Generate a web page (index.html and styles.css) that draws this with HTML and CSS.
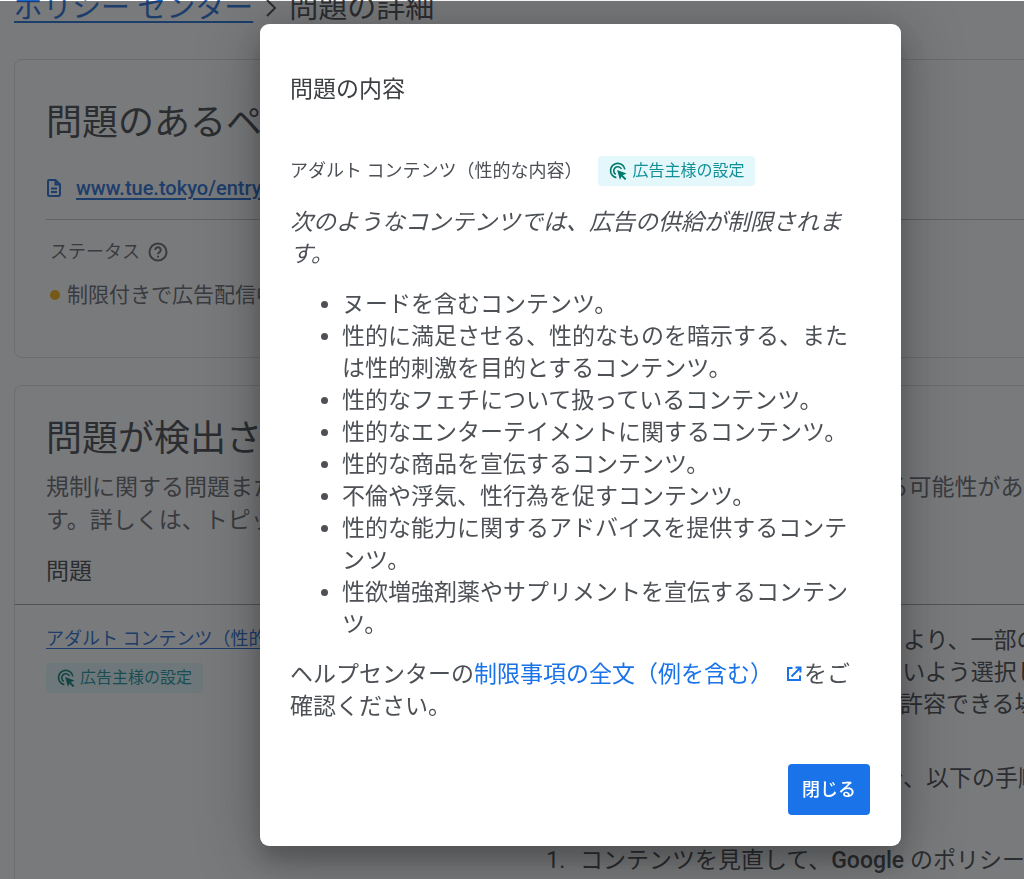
FILE: index.html
```html
<!DOCTYPE html>
<html lang="ja">
<head>
	<meta charset="utf-8">
	<meta name="viewport" content="width=device-width, initial-scale=1">
	<title>問題の詳細</title>
	<link rel="stylesheet" href="styles.css">
</head>

<body>

	<svg class="sprite" aria-hidden="true">
		<symbol id="icon-click" viewBox="0 0 20 20">
			<path d="M8.2 17.4A8 8 0 1 1 17.6 8.200" fill="none" stroke="currentColor" stroke-width="1.800"/>
			<path d="M7.600 13.700A4.500 4.500 0 1 1 13.800 7.800" fill="none" stroke="currentColor" stroke-width="1.800"/>
			<path d="M9 9l10.500 3.700-4.200 1.900 4 4-1.500 1.500-4-4-1.600 3.900z" fill="currentColor"/>
		</symbol>
	</svg>

	<main class="page">
		<nav class="breadcrumb">
			<a href="#">ポリシー センター</a>
			<svg class="chevron" viewBox="0 0 12 20" aria-hidden="true"><path d="M2 2l8 8-8 8"/></svg>
			<span>問題の詳細</span>
		</nav>

		<section class="card">
			<h1>問題のあるページ</h1>
			<div class="url">
				<svg class="doc" viewBox="0 0 16 20" aria-hidden="true">
					<path d="M3 2h6.500L14 6.500V16.500a1.500 1.500 0 0 1-1.500 1.500H3.500A1.500 1.500 0 0 1 2 16.500V3a1 1 0 0 1 1-1zM9.500 2v4.500H14M5 10.500h6M5 14h6"/>
				</svg>
				<a href="#">www.tue.tokyo/entry</a>
			</div>
			<div class="status">
				<div class="status-label">
					ステータス
					<svg class="help" viewBox="0 0 20 20" aria-hidden="true">
						<circle cx="10" cy="10" r="8.500"/>
						<path d="M7.300 8a2.700 2.700 0 1 1 4.300 2.100c-1 .7-1.600 1.100-1.600 2.200M10 13.800v1.700"/>
					</svg>
				</div>
				<div class="status-value">制限付きで広告配信中</div>
			</div>
		</section>

		<section class="card issues">
			<h1>問題が検出されました</h1>
			<p class="lead">規制に関する問題または その他の問題が検出されたため、 広告の配信が制限される可能性がありま<br>す。詳しくは、トピックをご覧ください。</p>
			<table>
				<colgroup>
					<col class="col-issue">
					<col>
				</colgroup>
				<thead>
					<tr><th colspan="2">問題</th></tr>
				</thead>
				<tbody>
					<tr>
						<td class="issue">
							<a href="#">アダルト コンテンツ（性的な内容）</a>
							<span class="badge"><svg aria-hidden="true"><use href="#icon-click"/></svg>広告主様の設定</span>
						</td>
						<td class="detail">
							<p>広告主様の希望や配信の設定内容により、一部の<br>広告はページに表示されることのないよう選択し<br>されています。そのため広告主様が許容できる場合</p>
							<p>この問題を解決する必要がある場合、以下の手順</p>
							<ol>
								<li>コンテンツを見直して、<b>Google</b> のポリシーに</li>
							</ol>
						</td>
					</tr>
				</tbody>
			</table>
		</section>
	</main>

	<div class="overlay">
		<div class="dialog" role="dialog" aria-modal="true" aria-labelledby="dialog-title">
			<h2 id="dialog-title">問題の内容</h2>
			<div class="topic">
				<span>アダルト コンテンツ（性的な内容）</span>
				<span class="badge"><svg aria-hidden="true"><use href="#icon-click"/></svg>広告主様の設定</span>
			</div>
			<p class="summary"><em>次のようなコンテンツでは、広告の供給が制限されます。</em></p>
			<ul>
				<li>ヌードを含むコンテンツ。</li>
				<li>性的に満足させる、性的なものを暗示する、または性的刺激を目的とするコンテンツ。</li>
				<li>性的なフェチについて扱っているコンテンツ。</li>
				<li>性的なエンターテイメントに関するコンテンツ。</li>
				<li>性的な商品を宣伝するコンテンツ。</li>
				<li>不倫や浮気、性行為を促すコンテンツ。</li>
				<li>性的な能力に関するアドバイスを提供するコンテンツ。</li>
				<li>性欲増強剤薬やサプリメントを宣伝するコンテンツ。</li>
			</ul>
			<p>ヘルプセンターの<a href="#">制限事項の全文（例を含む）<svg class="external" viewBox="0 0 16 16" aria-hidden="true"><path d="M6.500 2H2v12h12V9.500M9.500 1.500h5v5M14 2L5.500 10.500"/></svg></a>をご確認ください。</p>
			<div class="actions">
				<button type="button">閉じる</button>
			</div>
		</div>
	</div>

</body>

</html>
```
FILE: styles.css
```css
* {
	box-sizing: border-box;
}

body {
	margin: 0;
	height: 100vh;
	overflow: hidden;
	font-family: Roboto, "Noto Sans CJK JP", sans-serif;
	font-size: 23px;
	line-height: 32px;
	color: #3c4043;
	background: #fff;
}

h1, h2, p, ul, ol {
	margin: 0;
	padding: 0;
	font-weight: 400;
}

a {
	color: #1967d2;
}

.sprite {
	display: none;
}

/* Page behind the dialog */

.page {
	height: 100vh;
	padding-left: 14px;
	overflow: hidden;
	white-space: nowrap;
}

.breadcrumb {
	display: flex;
	align-items: center;
	gap: 12px;
	margin-top: -11px;
	font-size: 29px;
	line-height: 38px;
	color: #3c4043;
}

.breadcrumb a {
	text-underline-offset: 3px;
}

.chevron {
	width: 12px;
	height: 20px;
	fill: none;
	stroke: #3c4043;
	stroke-width: 2;
}

.card {
	margin: 32px -16px 0 0;
	padding: 40px 0 46px 31px;
	border: 1px solid #dadce0;
	border-radius: 8px;
}

.card h1 {
	font-size: 36px;
	line-height: 46px;
	color: #3c4043;
}

.url {
	display: flex;
	align-items: center;
	gap: 14px;
	margin-top: 26px;
	padding-bottom: 15px;
	border-bottom: 1px solid #bdc1c6;
	font-size: 20px;
	font-weight: 500;
}

.url a {
	text-underline-offset: 3px;
}

.doc {
	width: 16px;
	height: 20px;
	fill: none;
	stroke: #1967d2;
	stroke-width: 2;
}

.status {
	padding: 16px 0 0 4px;
	color: #5f6368;
}

.status-label {
	display: flex;
	align-items: center;
	gap: 8px;
	font-size: 18px;
}

.help {
	width: 20px;
	height: 20px;
	fill: none;
	stroke: #5f6368;
	stroke-width: 2;
}

.status-value {
	display: flex;
	align-items: center;
	gap: 7px;
	margin-top: 11px;
	font-size: 21px;
}

.status-value:before {
	content: "";
	width: 10px;
	height: 10px;
	border-radius: 50%;
	background: #f9ab00;
}

.issues {
	margin-top: 27px;
	padding: 30px 0;
}

.issues h1, .lead {
	padding-left: 31px;
}

.lead {
	margin-top: 9px;
	line-height: 33px;
	color: #5f6368;
}

table {
	width: 100%;
	margin-top: 19px;
	border-collapse: collapse;
	table-layout: fixed;
}

th {
	padding: 0 31px 16px;
	border-bottom: 1px solid #9aa0a6;
	text-align: left;
	font-weight: 400;
}

td {
	padding: 0;
	vertical-align: top;
}

.col-issue {
	width: 520px;
}

.issue {
	padding: 18px 0 0 31px;
	font-size: 18px;
}

.issue a {
	display: block;
	text-underline-offset: 3px;
}

.issue .badge {
	margin-top: 8px;
}

.detail {
	padding-top: 20px;
}

.detail p {
	margin-bottom: 42px;
}

.detail ol {
	padding-top: 8px;
	padding-left: 36px;
}

.detail li {
	padding-left: 9px;
}

.detail b {
	font-weight: 500;
}

.badge {
	display: inline-flex;
	align-items: center;
	gap: 5px;
	height: 30px;
	padding: 0 11px;
	border-radius: 4px;
	font-size: 16px;
	color: #129098;
	background: #e4f7fb;
}

.badge svg {
	width: 18px;
	height: 18px;
	color: #00796b;
}

/* Dialog */

.overlay {
	position: fixed;
	inset: 1px 0 0;
	display: flex;
	align-items: flex-start;
	padding: 23px 123px 32px 260px;
	background: rgba(32, 33, 36, 0.6);
}

.dialog {
	flex: 1;
	padding: 50px 31px 31px 30px;
	border-radius: 9px;
	background: #fff;
	box-shadow: 0 14px 22px rgba(0, 0, 0, 0.2), 0 8px 60px 8px rgba(0, 0, 0, 0.22);
	color: #4d5156;
}

.dialog h2 {
	font-size: 23px;
	color: #3c4043;
}

.topic {
	display: flex;
	align-items: center;
	gap: 16px;
	margin-top: 50px;
	font-size: 18px;
	line-height: 30px;
}

.summary {
	margin-top: 21px;
}

.dialog ul {
	margin: 18px 0;
	padding-left: 52px;
}

.dialog a {
	color: #1a73e8;
	text-decoration: none;
}

.external {
	width: 16px;
	height: 16px;
	margin: 0 2px 0 13px;
	fill: none;
	stroke: #1a73e8;
	stroke-width: 2;
}

.actions {
	display: flex;
	justify-content: flex-end;
	margin-top: 41px;
}

button {
	padding: 10px 14px 9px;
	border: 0;
	border-radius: 4px;
	font: 500 18px/32px Roboto, "Noto Sans CJK JP", sans-serif;
	color: #fff;
	background: #1a73e8;
}
```
